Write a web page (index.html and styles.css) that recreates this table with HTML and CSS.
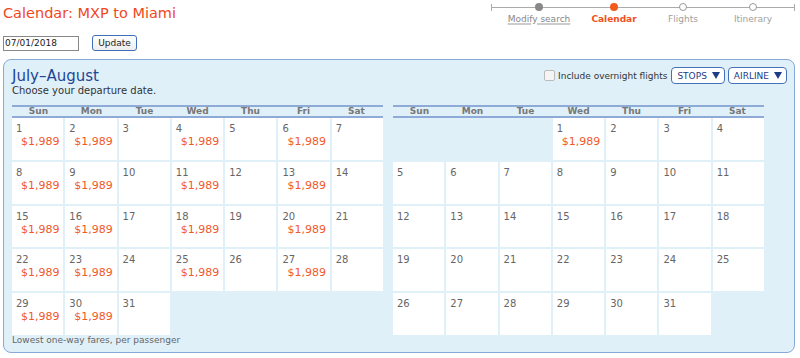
FILE: index.html
```html
<!DOCTYPE html>
<html>
<head>
<meta charset="utf-8">
<link rel="stylesheet" href="styles.css">
</head>
<body>
<div class="top">
  <h1 class="title">Calendar: MXP to Miami</h1>
  <div class="progress">
    <div class="step"><span class="dot done"></span><a class="lbl link">Modify search</a></div>
    <div class="step"><span class="dot cur"></span><span class="lbl cur">Calendar</span></div>
    <div class="step"><span class="dot todo"></span><span class="lbl">Flights</span></div>
    <div class="step"><span class="dot todo"></span><span class="lbl">Itinerary</span></div>
  </div>
</div>
<div class="form">
  <input class="date" type="text" value="07/01/2018">
  <button class="update">Update</button>
</div>
<div class="panel">
  <div class="phead">
    <div>
      <div class="month">July–August</div>
      <div class="choose">Choose your departure date.</div>
    </div>
    <div class="filters">
      <span class="chk"></span>
      <span class="inc">Include overnight flights</span>
      <span class="dd">STOPS <span class="tri"></span></span>
      <span class="dd">AIRLINE <span class="tri"></span></span>
    </div>
  </div>
  <div class="cals">
    <div class="cal">
      <div class="dows"><span>Sun</span><span>Mon</span><span>Tue</span><span>Wed</span><span>Thu</span><span>Fri</span><span>Sat</span></div>
      <div class="grid">
        <div class="c"><div class="n">1</div><div class="p">$1,989</div></div>
        <div class="c"><div class="n">2</div><div class="p">$1,989</div></div>
        <div class="c"><div class="n">3</div></div>
        <div class="c"><div class="n">4</div><div class="p">$1,989</div></div>
        <div class="c"><div class="n">5</div></div>
        <div class="c"><div class="n">6</div><div class="p">$1,989</div></div>
        <div class="c"><div class="n">7</div></div>
        <div class="c"><div class="n">8</div><div class="p">$1,989</div></div>
        <div class="c"><div class="n">9</div><div class="p">$1,989</div></div>
        <div class="c"><div class="n">10</div></div>
        <div class="c"><div class="n">11</div><div class="p">$1,989</div></div>
        <div class="c"><div class="n">12</div></div>
        <div class="c"><div class="n">13</div><div class="p">$1,989</div></div>
        <div class="c"><div class="n">14</div></div>
        <div class="c"><div class="n">15</div><div class="p">$1,989</div></div>
        <div class="c"><div class="n">16</div><div class="p">$1,989</div></div>
        <div class="c"><div class="n">17</div></div>
        <div class="c"><div class="n">18</div><div class="p">$1,989</div></div>
        <div class="c"><div class="n">19</div></div>
        <div class="c"><div class="n">20</div><div class="p">$1,989</div></div>
        <div class="c"><div class="n">21</div></div>
        <div class="c"><div class="n">22</div><div class="p">$1,989</div></div>
        <div class="c"><div class="n">23</div><div class="p">$1,989</div></div>
        <div class="c"><div class="n">24</div></div>
        <div class="c"><div class="n">25</div><div class="p">$1,989</div></div>
        <div class="c"><div class="n">26</div></div>
        <div class="c"><div class="n">27</div><div class="p">$1,989</div></div>
        <div class="c"><div class="n">28</div></div>
        <div class="c"><div class="n">29</div><div class="p">$1,989</div></div>
        <div class="c"><div class="n">30</div><div class="p">$1,989</div></div>
        <div class="c"><div class="n">31</div></div>
      </div>
    </div>
    <div class="cal">
      <div class="dows"><span>Sun</span><span>Mon</span><span>Tue</span><span>Wed</span><span>Thu</span><span>Fri</span><span>Sat</span></div>
      <div class="grid">
        <div class="e"></div><div class="e"></div><div class="e"></div>
        <div class="c"><div class="n">1</div><div class="p">$1,989</div></div>
        <div class="c"><div class="n">2</div></div>
        <div class="c"><div class="n">3</div></div>
        <div class="c"><div class="n">4</div></div>
        <div class="c"><div class="n">5</div></div>
        <div class="c"><div class="n">6</div></div>
        <div class="c"><div class="n">7</div></div>
        <div class="c"><div class="n">8</div></div>
        <div class="c"><div class="n">9</div></div>
        <div class="c"><div class="n">10</div></div>
        <div class="c"><div class="n">11</div></div>
        <div class="c"><div class="n">12</div></div>
        <div class="c"><div class="n">13</div></div>
        <div class="c"><div class="n">14</div></div>
        <div class="c"><div class="n">15</div></div>
        <div class="c"><div class="n">16</div></div>
        <div class="c"><div class="n">17</div></div>
        <div class="c"><div class="n">18</div></div>
        <div class="c"><div class="n">19</div></div>
        <div class="c"><div class="n">20</div></div>
        <div class="c"><div class="n">21</div></div>
        <div class="c"><div class="n">22</div></div>
        <div class="c"><div class="n">23</div></div>
        <div class="c"><div class="n">24</div></div>
        <div class="c"><div class="n">25</div></div>
        <div class="c"><div class="n">26</div></div>
        <div class="c"><div class="n">27</div></div>
        <div class="c"><div class="n">28</div></div>
        <div class="c"><div class="n">29</div></div>
        <div class="c"><div class="n">30</div></div>
        <div class="c"><div class="n">31</div></div>
      </div>
    </div>
  </div>
  <div class="foot">Lowest one-way fares, per passenger</div>
</div>
</body>
</html>
```
FILE: styles.css
```css
html, body {
  margin: 0;
  padding: 0;
  background: #fff;
  font-family: "DejaVu Sans", Verdana, sans-serif;
  color: #333;
}
.top {
  display: flex;
  justify-content: space-between;
  align-items: flex-start;
  padding: 0 5px 0 3px;
}
.title {
  margin: 0;
  padding-top: 5px;
  font-size: 14.5px;
  font-weight: normal;
  line-height: 17px;
  color: #f0471d;
}
.progress {
  display: grid;
  grid-template-columns: 96px 54px 84px 56px;
  width: 304px;
  padding-top: 3px;
  background:
    linear-gradient(#aaa, #aaa) 0 7px / 100% 1px no-repeat,
    linear-gradient(#aaa, #aaa) 0 4px / 1px 7px no-repeat,
    linear-gradient(#aaa, #aaa) 100% 4px / 1px 7px no-repeat;
}
.step {
  display: flex;
  flex-direction: column;
  align-items: center;
}
.dot {
  width: 8px;
  height: 8px;
  border-radius: 50%;
  box-sizing: border-box;
}
.dot.done { background: #888; }
.dot.cur { background: #f25a1c; }
.dot.todo { background: #fff; border: 1px solid #999; }
.lbl {
  margin-top: 3px;
  font-size: 9px;
  line-height: 11px;
  color: #a0a0a0;
  white-space: nowrap;
}
.lbl.link {
  color: #888;
  text-decoration: underline;
  text-decoration-color: #ccc;
  text-decoration-thickness: 2px;
  text-underline-offset: 1px;
}
.lbl.cur {
  color: #f0501c;
  font-weight: bold;
}
.form {
  display: flex;
  align-items: center;
  gap: 13px;
  padding: 10px 0 0 3px;
}
.date {
  box-sizing: border-box;
  width: 76px;
  height: 15px;
  padding: 0 1px;
  border: 1px solid #888;
  border-radius: 0;
  font-family: "DejaVu Sans", Verdana, sans-serif;
  font-size: 9px;
  color: #222;
}
.update {
  box-sizing: border-box;
  width: 45px;
  height: 16px;
  padding: 0;
  border: 1px solid #3f6fb6;
  border-radius: 3px;
  background: linear-gradient(#fff, #eee);
  font-family: "DejaVu Sans", Verdana, sans-serif;
  font-size: 9px;
  color: #222;
}
.panel {
  margin: 8px 0 0 3px;
  width: 792px;
  height: 294px;
  box-sizing: border-box;
  border: 1px solid #86a9d9;
  border-radius: 8px;
  background: #dff0f9;
  padding: 7px 7px 0 8px;
}
.phead {
  display: flex;
  justify-content: space-between;
  align-items: flex-start;
}
.month {
  font-size: 15px;
  line-height: 17px;
  color: #1f4596;
  padding-top: 1px;
}
.choose {
  font-size: 10px;
  line-height: 12px;
  color: #333;
}
.filters {
  display: flex;
  align-items: center;
  gap: 3px;
}
.chk {
  width: 9px;
  height: 9px;
  border: 1px solid #bbb;
  border-radius: 2px;
  background: #f5f5f5;
}
.inc {
  font-size: 9px;
  color: #333;
  margin-right: 1px;
}
.dd {
  display: flex;
  align-items: center;
  gap: 5px;
  height: 15px;
  padding: 0 4px 0 5px;
  border: 1px solid #4472b9;
  border-radius: 4px;
  background: #fff;
  font-size: 9px;
  color: #1c3c85;
}
.tri {
  width: 0;
  height: 0;
  border-left: 4px solid transparent;
  border-right: 4px solid transparent;
  border-top: 7px solid #1c3c85;
}
.cals {
  display: flex;
  gap: 10px;
  margin-top: 8px;
}
.cal {
  width: 371px;
}
.dows {
  display: grid;
  grid-template-columns: repeat(7, 1fr);
  border-top: 2px solid #8eabd8;
  border-bottom: 2px solid #8eabd8;
  font-size: 9px;
  font-weight: bold;
  line-height: 9px;
  color: #777;
  text-align: center;
}
.grid {
  display: grid;
  grid-template-columns: repeat(7, 1fr);
  grid-auto-rows: 41.75px;
  gap: 2px;
}
.c {
  background: #fff;
  padding: 5px 0 0 4px;
}
.n {
  font-size: 10px;
  line-height: 12px;
  color: #666;
}
.p {
  margin-left: 5px;
  font-size: 11px;
  line-height: 13px;
  color: #f0592a;
}
.foot {
  margin-top: 0;
  font-size: 9px;
  line-height: 11px;
  color: #666;
}
```
